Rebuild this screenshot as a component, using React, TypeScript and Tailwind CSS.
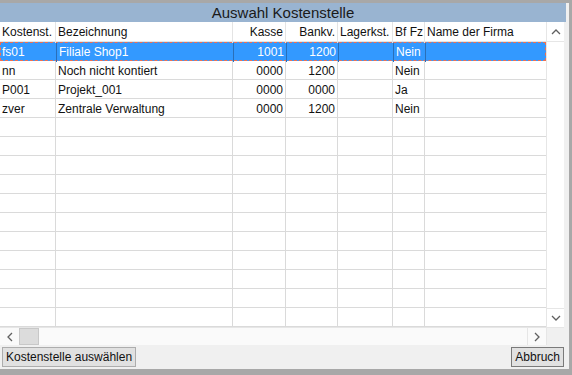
import React from 'react';

type Row = {
  kst: string;
  bez: string;
  kasse: string;
  bank: string;
  lager: string;
  bf: string;
  firma: string;
};

const rows: Row[] = [
  { kst: 'fs01', bez: 'Filiale Shop1', kasse: '1001', bank: '1200', lager: '', bf: 'Nein', firma: '' },
  { kst: 'nn', bez: 'Noch nicht kontiert', kasse: '0000', bank: '1200', lager: '', bf: 'Nein', firma: '' },
  { kst: 'P001', bez: 'Projekt_001', kasse: '0000', bank: '0000', lager: '', bf: 'Ja', firma: '' },
  { kst: 'zver', bez: 'Zentrale Verwaltung', kasse: '0000', bank: '1200', lager: '', bf: 'Nein', firma: '' },
];

const emptyRows = 11;

const cols = 'grid grid-cols-[56px_177px_53px_52px_55px_32px_121px]';

const Chevron: React.FC<{ dir: 'up' | 'down' | 'left' | 'right' }> = ({ dir }) => {
  const d = {
    up: 'M1 5 L5 1 L9 5',
    down: 'M1 1 L5 5 L9 1',
    left: 'M5 1 L1 5 L5 9',
    right: 'M1 1 L5 5 L1 9',
  }[dir];
  const vertical = dir === 'up' || dir === 'down';
  return (
    <svg width={vertical ? 10 : 6} height={vertical ? 6 : 10} viewBox={vertical ? '0 0 10 6' : '0 0 6 10'}>
      <path d={d} fill="none" stroke="#606060" strokeWidth="1.3" />
    </svg>
  );
};

export default function App() {
  return (
    <div className="w-[572px] h-[375px] bg-[#a8a8a8] pt-[3px] pr-[3px] pb-[6px] font-['Liberation_Sans',Arial,sans-serif] text-[12px] text-[#111]">
      <div className="h-full bg-[#f0f0f0] flex flex-col">
        {/* Caption */}
        <div className="h-[19px] bg-[#99b4d1] text-center text-[15px] leading-[20px] text-[#1a1a1a] mr-[3px]">
          Auswahl Kostenstelle
        </div>

        {/* Grid + vertical scrollbar */}
        <div className="flex">
          <div className="w-[546px] bg-white">
            <div className={`${cols} h-[20px] leading-[21px] border-b border-[#e4e4e4]`}>
              <div className="pl-[2px] border-r border-[#e4e4e4] whitespace-nowrap">Kostenst.</div>
              <div className="pl-[2px] border-r border-[#e4e4e4]">Bezeichnung</div>
              <div className="pr-[2px] text-right border-r border-[#e4e4e4]">Kasse</div>
              <div className="pr-[2px] text-right border-r border-[#e4e4e4]">Bankv.</div>
              <div className="pl-[2px] border-r border-[#e4e4e4]">Lagerkst.</div>
              <div className="pl-[2px] border-r border-[#e4e4e4] whitespace-nowrap">Bf Fz</div>
              <div className="pl-[2px]">Name der Firma</div>
            </div>
            {rows.map((r, i) =>
              i === 0 ? (
                <div
                  key={r.kst}
                  className={`${cols} h-[19px] leading-[19px] bg-[#3399ff] text-white border border-dashed border-[#f07050]`}
                >
                  <div className="pl-[1px] border-r border-[#2a6fb8]">{r.kst}</div>
                  <div className="pl-[2px] border-r border-[#2a6fb8]">{r.bez}</div>
                  <div className="pr-[2px] text-right border-r border-[#2a6fb8]">{r.kasse}</div>
                  <div className="pr-[2px] text-right border-r border-[#2a6fb8]">{r.bank}</div>
                  <div className="pl-[2px] border-r border-[#2a6fb8]">{r.lager}</div>
                  <div className="pl-[2px] border-r border-[#2a6fb8]">{r.bf}</div>
                  <div className="pl-[2px]">{r.firma}</div>
                </div>
              ) : (
                <div key={r.kst} className={`${cols} h-[19px] leading-[20px] border-b border-[#dadada]`}>
                  <div className="pl-[2px] border-r border-[#dadada]">{r.kst}</div>
                  <div className="pl-[2px] border-r border-[#dadada]">{r.bez}</div>
                  <div className="pr-[2px] text-right border-r border-[#dadada]">{r.kasse}</div>
                  <div className="pr-[2px] text-right border-r border-[#dadada]">{r.bank}</div>
                  <div className="pl-[2px] border-r border-[#dadada]">{r.lager}</div>
                  <div className="pl-[2px] border-r border-[#dadada]">{r.bf}</div>
                  <div className="pl-[2px]">{r.firma}</div>
                </div>
              )
            )}
            {Array.from({ length: emptyRows }).map((_, i) => (
              <div key={i} className={`${cols} h-[19px] border-b border-[#dadada]`}>
                <div className="border-r border-[#dadada]" />
                <div className="border-r border-[#dadada]" />
                <div className="border-r border-[#dadada]" />
                <div className="border-r border-[#dadada]" />
                <div className="border-r border-[#dadada]" />
                <div className="border-r border-[#dadada]" />
                <div />
              </div>
            ))}
          </div>
          <div className="w-[18px] bg-white border-l border-[#e6e6e6] flex flex-col justify-between">
            <div className="h-[20px] flex items-center justify-center border-b border-[#e6e6e6]">
              <Chevron dir="up" />
            </div>
            <div className="h-[19px] flex items-center justify-center border-t border-[#e6e6e6]">
              <Chevron dir="down" />
            </div>
          </div>
        </div>

        {/* Horizontal scrollbar */}
        <div className="flex h-[18px]">
          <div className="w-[546px] flex bg-[#fafafa] border-t border-[#e6e6e6]">
            <div className="w-[19px] flex items-center justify-center">
              <Chevron dir="left" />
            </div>
            <div className="w-[20px] bg-[#dcdcdc] border border-[#c8c8c8]" />
            <div className="flex-1" />
            <div className="w-[19px] flex items-center justify-center border-l border-[#e6e6e6]">
              <Chevron dir="right" />
            </div>
          </div>
          <div className="w-[18px] bg-[#f0f0f0] border-t border-l border-[#e6e6e6]" />
        </div>

        {/* Buttons */}
        <div className="flex-1 flex items-start justify-between pt-[2px] pl-[2px] pr-[5px]">
          <button className="h-[20px] px-[3px] bg-[#e1e1e1] border border-[#adadad] text-[12px] leading-[19px] text-[#111]">
            Kostenstelle auswählen
          </button>
          <button className="h-[20px] px-[3px] bg-[#e1e1e1] border border-[#7a7a7a] text-[12px] leading-[19px] text-[#111]">
            Abbruch
          </button>
        </div>
      </div>
    </div>
  );
}
